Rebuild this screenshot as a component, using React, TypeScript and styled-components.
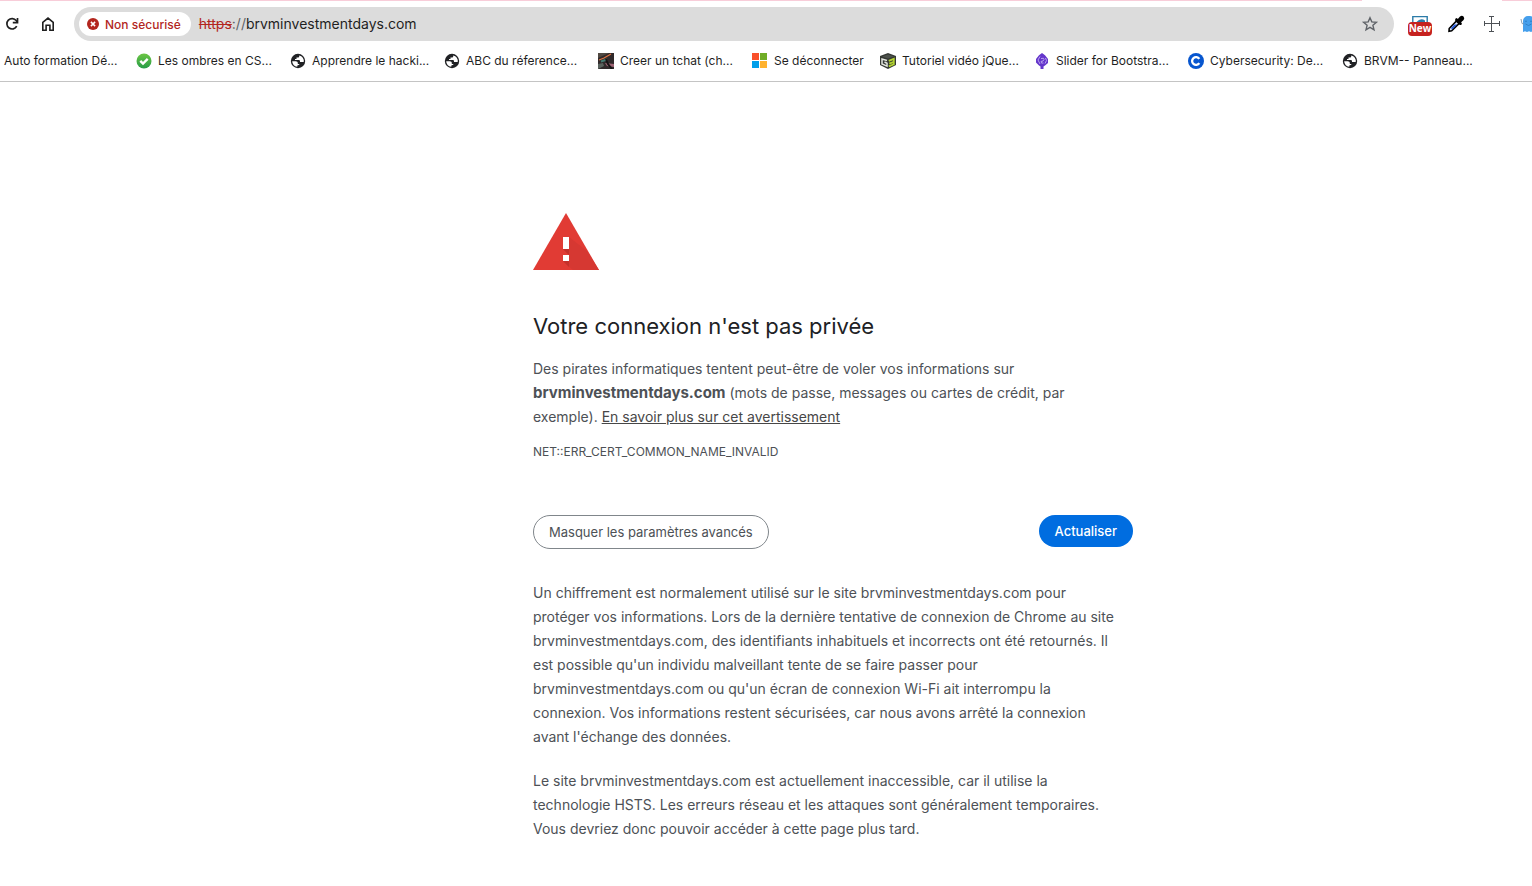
import React from "react";
import styled, { createGlobalStyle } from "styled-components";

const GlobalStyle = createGlobalStyle`
  * { box-sizing: border-box; }
  body {
    margin: 0;
    background: #fff;
    color: #1f1f1f;
    font-family: Inter, "Liberation Sans", sans-serif;
    overflow-x: hidden;
  }
  button { font-family: inherit; cursor: pointer; }
`;

const BrowserHeader = styled.header`
  border-bottom: 1px solid #c4c4c4;
  padding-bottom: 6px;
  overflow: hidden;
`;

const TabStripEdge = styled.div`
  display: flex;
  justify-content: space-between;
  height: 1px;
`;

const TabEdge = styled.div<{ $grow?: boolean }>`
  background: #f8cdd9;
  ${(p) => (p.$grow ? "flex: 1; margin-right: 140px;" : "width: 30px;")}
`;

const Toolbar = styled.div`
  display: flex;
  align-items: center;
  height: 46px;
  padding-left: 2px;
`;

const IconButton = styled.button`
  display: flex;
  flex: none;
  align-items: center;
  justify-content: center;
  width: 20px;
  height: 28px;
  padding: 0;
  border: 0;
  background: none;
  color: #1f1f1f;
`;

const Navigation = styled.nav`
  display: flex;
  gap: 16px;
  margin-right: 16px;
`;

const AddressBar = styled.div`
  display: flex;
  flex: 1;
  align-items: center;
  gap: 8px;
  height: 34px;
  padding: 0 14px 0 5px;
  border-radius: 17px;
  background: #dcdcdc;
`;

const SecurityChip = styled.button`
  display: flex;
  align-items: center;
  gap: 6px;
  height: 24px;
  padding: 0 10px 0 8px;
  border: 0;
  border-radius: 12px;
  background: #fff;
  color: #b3261e;
  font-size: 12px;
  font-weight: 500;
  white-space: nowrap;
`;

const Url = styled.div`
  flex: 1;
  font-size: 14px;
  line-height: 20px;
  white-space: nowrap;
`;

const StruckScheme = styled.s`
  color: #b3261e;
`;

const Separator = styled.span`
  color: #5f6368;
`;

const Extensions = styled.div`
  display: flex;
  flex: none;
  gap: 12px;
  width: 138px;
  padding-left: 14px;
  overflow: hidden;
`;

const ExtensionButton = styled(IconButton)`
  width: 24px;
`;

const BookmarkBar = styled.nav`
  display: flex;
  align-items: center;
  gap: 16px;
  height: 28px;
  padding-left: 4px;
`;

const Bookmark = styled.a`
  display: flex;
  flex: none;
  align-items: center;
  gap: 6px;
  color: #1f1f1f;
  font-size: 12px;
  line-height: 16px;
  text-decoration: none;
  white-space: nowrap;
`;

const BookmarkLabel = styled.span<{ $short?: boolean }>`
  width: ${(p) => (p.$short ? "90px" : "116px")};
`;

const Page = styled.main`
  display: grid;
  grid-template-columns: 533fr minmax(0, 600px) 399fr;
  padding: 131px 0 44px;
`;

const Interstitial = styled.section`
  grid-column: 2;
  color: #4d5156;
  font-size: 14px;
  line-height: 24px;
`;

const WarningIcon = styled.svg`
  display: block;
  margin-bottom: 41px;
`;

const Title = styled.h1`
  margin: 0 0 16px;
  color: #202124;
  font-size: 22px;
  font-weight: 400;
  line-height: 30px;
`;

const Paragraph = styled.p`
  margin: 0 0 20px;
`;

const Lead = styled(Paragraph)`
  margin: 0;
`;

const Line = styled.span`
  display: block;
`;

const SiteName = styled.strong`
  font-size: 15px;
  line-height: 20px;
`;

const LearnMore = styled.a`
  color: #474747;
`;

const ErrorCode = styled.div`
  margin: 14px 0 54px;
  font-size: 12px;
  line-height: 18px;
`;

const Actions = styled.div`
  display: flex;
  align-items: flex-start;
  justify-content: space-between;
  margin-bottom: 32px;
`;

const ActionButton = styled.button<{ $primary?: boolean }>`
  height: ${(p) => (p.$primary ? "32px" : "34px")};
  padding: ${(p) => (p.$primary ? "0 16px" : "0 15px")};
  border: ${(p) => (p.$primary ? "0" : "1px solid #80868b")};
  border-radius: 17px;
  background: ${(p) => (p.$primary ? "#006de0" : "#fff")};
  color: ${(p) => (p.$primary ? "#fff" : "#4d5156")};
  font-size: 13px;
  font-weight: ${(p) => (p.$primary ? 500 : 400)};
  white-space: nowrap;
`;

const ReloadIcon = () => (
  <svg width="16" height="16" viewBox="0 0 16 16" fill="none" stroke="currentColor" strokeWidth="1.7">
    <path d="M12.7 10.2A5.2 5.2 0 1 1 12.2 4.6L13.3 6" />
    <path d="M13.5 2v4.700H8.800" />
  </svg>
);

const HomeIcon = () => (
  <svg width="16" height="16" viewBox="0 0 16 16" fill="none" stroke="currentColor" strokeWidth="1.6">
    <path d="M2.800 6.300L8 2.100l5.200 4.200v7.900H9.900V9.300H6.100v4.900H2.800z" />
  </svg>
);

const DangerIcon = () => (
  <svg width="12" height="12" viewBox="0 0 12 12">
    <circle cx="6" cy="6" r="6" fill="#b3261e" />
    <path d="M3.900 3.900l4.200 4.200M8.100 3.900L3.900 8.100" stroke="#fff" strokeWidth="1.5" />
  </svg>
);

const StarIcon = () => (
  <svg width="18" height="18" viewBox="0 0 18 18" fill="none" stroke="#5f6368" strokeWidth="1.4">
    <path d="M9 2.700l1.800 4.200 4.600.4-3.500 3 1.100 4.500L9 12.400l-4 2.400 1.100-4.500-3.500-3 4.600-.4z" />
  </svg>
);

const NewExtensionIcon = () => (
  <svg width="24" height="24" viewBox="0 0 24 24">
    <path d="M4.800 11V4.600h14.400V11" fill="#fff" stroke="#2b7ba8" strokeWidth="1.400" />
    <path d="M8.500 10q4-4.500 8.500-1.500V10z" fill="#2b7ba8" />
    <rect y="10" width="24" height="14" rx="4" fill="#c5221f" />
    <text x="12" y="20" textAnchor="middle" fill="#fff" fontFamily="Open Sans, sans-serif" fontSize="10" fontWeight="700">New</text>
  </svg>
);

const EyedropperIcon = () => (
  <svg width="18" height="18" viewBox="0 0 18 18">
    <path d="M2.200 13.500L9.500 6l2.600 2.600-7.400 7.200-2.700.4z" fill="#dbe6ff" stroke="#000" strokeWidth="1.600" />
    <path d="M4 13l3.500-3.600h2.600l-5 5z" fill="#2457d6" />
    <path d="M8.300 3.700l1.500-.6 1 .8 2.200-2.500q2-1.400 3.500.1t.1 3.500l-2.500 2.200.8 1.200-.6 1.500-1.500.2L8.100 5.400z" fill="#000" />
  </svg>
);

const CrossArrowsIcon = () => (
  <svg width="18" height="18" viewBox="0 0 18 18" fill="none" stroke="#4d5156" strokeWidth="1">
    <path d="M8.500 1.500v15M1.500 8.500h15M6 1.500h5M6 16.500h5M1.500 6v5M16.500 6v5" />
  </svg>
);

const GhostIcon = () => (
  <svg width="24" height="18" viewBox="0 0 24 18">
    <path d="M7 17V6a5 5 0 0 1 5-5h2a5 5 0 0 1 5 5v11l-2-.8-2 .8-2-.8-2 .8-2-.8z" fill="#459fec" />
    <path d="M5 4l1 4.500 2 .5" fill="none" stroke="#7e98ae" strokeWidth=".9" />
    <path d="M9 6.500q1-1 2 0M14 6.500q1-1 2 0M9.500 9q3 3 6 0" fill="none" stroke="#2978be" strokeWidth=".8" />
  </svg>
);

const GlobeIcon = () => (
  <svg width="16" height="16" viewBox="0 0 16 16">
    <circle cx="8" cy="8" r="7.200" fill="#202124" />
    <path d="M2.200 8.200h3.600q2 0 2 1.500v1.200h1.500v.9l-2 .8v1.100A5.800 5.800 0 0 1 2.200 8.200z" fill="#fff" />
    <path d="M9.200 2.400v1.200q0 1-1.100 1H6.500v1.500H5v.9h3.800q1.200 0 1.200 1.100v1h3.700A5.800 5.800 0 0 0 9.200 2.400z" fill="#fff" />
  </svg>
);

const CheckIcon = () => (
  <svg width="16" height="16" viewBox="0 0 16 16">
    <defs>
      <linearGradient id="check-fill" x1="0" y1="0" x2="0" y2="1">
        <stop offset="0" stopColor="#6cc644" />
        <stop offset="1" stopColor="#279c48" />
      </linearGradient>
    </defs>
    <circle cx="8" cy="8" r="7.500" fill="url(#check-fill)" />
    <path d="M4.300 7.800l2.700 2.700 4.700-4.700" fill="none" stroke="#fff" strokeWidth="2.400" />
  </svg>
);

const ChatPhotoIcon = () => (
  <svg width="16" height="16" viewBox="0 0 16 16">
    <path fill="#30292a" d="M0 0h16v16H0z" />
    <path fill="#514942" d="M0 0h11L0 5z" />
    <path d="M1 7l5-2 7-4" stroke="#dc7442" strokeWidth="1.300" fill="none" />
    <path d="M3 8.500l6-2" stroke="#427b72" strokeWidth="2" />
    <path d="M7 10l9 1v3l-7-1z" fill="#9e6474" />
    <path d="M0 11l5-1 1 3-6 3z" fill="#59625d" />
    <path d="M8 6l2 5 4 5" stroke="#151314" strokeWidth="2" fill="none" />
  </svg>
);

const WindowsIcon = () => (
  <svg width="16" height="16" viewBox="0 0 16 16">
    <path fill="#f9502b" d="M0 0h7v7H0z" />
    <path fill="#70ad27" d="M8 0h7v7H8z" />
    <path fill="#009fea" d="M0 8h7v7H0z" />
    <path fill="#ffb22e" d="M8 8h7v7H8z" />
  </svg>
);

const CubeIcon = () => (
  <svg width="16" height="16" viewBox="0 0 16 16">
    <path d="M8 0l8 3v9l-8 4-8-4V3z" fill="#343834" />
    <path d="M2 3.600l6-2.200 6 2.200-6 2z" fill="#4c514b" />
    <path d="M7 7.500L2 6v5l5 2.200v-3L4.500 9" fill="none" stroke="#e2e5df" strokeWidth="1.500" />
    <path d="M8.800 7.800l5-2v5.400l-5 2.200M9.300 10.600l4.500-1.700" fill="none" stroke="#b3d332" strokeWidth="1.800" />
  </svg>
);

const GemIcon = () => (
  <svg width="16" height="16" viewBox="0 0 16 16">
    <path d="M8 0l3 2.200L14 6v4l-3 2.500-1.500 1V16h-3v-2.500L5 12.500 2 9.500V6l3-3.800z" fill="#6436cb" />
    <path d="M6 3.500L4 7l2 4M7 5.500q3.500-1 3 1T7 8.500q0 2.500 2.500 1.500M11.500 5l1 2.500-1.500 3" fill="none" stroke="#b9a0f0" strokeWidth="1" />
  </svg>
);

const LetterCIcon = () => (
  <svg width="16" height="16" viewBox="0 0 16 16">
    <circle cx="8" cy="8" r="8" fill="#0756cf" />
    <path d="M11.300 5.900a3.900 3.900 0 1 0 0 4.200" fill="none" stroke="#fff" strokeWidth="2.300" />
  </svg>
);

const bookmarks: { label: string; icon?: React.ReactNode; short?: boolean }[] = [
  { label: "Auto formation Dé..." },
  { label: "Les ombres en CS...", icon: <CheckIcon /> },
  { label: "Apprendre le hacki...", icon: <GlobeIcon /> },
  { label: "ABC du réference...", icon: <GlobeIcon /> },
  { label: "Creer un tchat (ch...", icon: <ChatPhotoIcon /> },
  { label: "Se déconnecter", icon: <WindowsIcon />, short: true },
  { label: "Tutoriel vidéo jQue...", icon: <CubeIcon /> },
  { label: "Slider for Bootstra...", icon: <GemIcon /> },
  { label: "Cybersecurity: De...", icon: <LetterCIcon /> },
  { label: "BRVM-- Panneau...", icon: <GlobeIcon /> },
];

const encryptionNotice = [
  "Un chiffrement est normalement utilisé sur le site brvminvestmentdays.com pour",
  "protéger vos informations. Lors de la dernière tentative de connexion de Chrome au site",
  "brvminvestmentdays.com, des identifiants inhabituels et incorrects ont été retournés. Il",
  "est possible qu'un individu malveillant tente de se faire passer pour",
  "brvminvestmentdays.com ou qu'un écran de connexion Wi-Fi ait interrompu la",
  "connexion. Vos informations restent sécurisées, car nous avons arrêté la connexion",
  "avant l'échange des données.",
];

const hstsNotice = [
  "Le site brvminvestmentdays.com est actuellement inaccessible, car il utilise la",
  "technologie HSTS. Les erreurs réseau et les attaques sont généralement temporaires.",
  "Vous devriez donc pouvoir accéder à cette page plus tard.",
];

export default function App() {
  return (
    <>
      <GlobalStyle />
      <BrowserHeader>
        <TabStripEdge>
          <TabEdge $grow />
          <TabEdge />
        </TabStripEdge>
        <Toolbar>
          <Navigation>
            <IconButton aria-label="Actualiser la page"><ReloadIcon /></IconButton>
            <IconButton aria-label="Accueil"><HomeIcon /></IconButton>
          </Navigation>
          <AddressBar>
            <SecurityChip><DangerIcon />Non sécurisé</SecurityChip>
            <Url><StruckScheme>https</StruckScheme><Separator>://</Separator>brvminvestmentdays.com</Url>
            <IconButton aria-label="Ajouter aux favoris"><StarIcon /></IconButton>
          </AddressBar>
          <Extensions>
            <ExtensionButton aria-label="Nouveautés"><NewExtensionIcon /></ExtensionButton>
            <ExtensionButton aria-label="Pipette"><EyedropperIcon /></ExtensionButton>
            <ExtensionButton aria-label="Dimensions"><CrossArrowsIcon /></ExtensionButton>
            <ExtensionButton aria-label="Fantôme"><GhostIcon /></ExtensionButton>
          </Extensions>
        </Toolbar>
        <BookmarkBar>
          {bookmarks.map((b) => (
            <Bookmark href="#" key={b.label}>
              {b.icon}
              <BookmarkLabel $short={b.short}>{b.label}</BookmarkLabel>
            </Bookmark>
          ))}
        </BookmarkBar>
      </BrowserHeader>
      <Page>
        <Interstitial>
          <WarningIcon width="66" height="57" viewBox="0 0 66 57" aria-hidden="true">
            <path d="M33 0l33 57H0z" fill="#e13b34" />
            <path d="M36 24l18 14 12 19H40l-10-9 6-6-6-6z" fill="#d63832" />
            <path d="M30 36h6v6zM30 48h6v6z" fill="#c4302b" />
            <path d="M30 24h6v12h-6zM30 42h6v6h-6z" fill="#fff" />
          </WarningIcon>
          <Title>Votre connexion n'est pas privée</Title>
          <Lead>
            <Line>Des pirates informatiques tentent peut-être de voler vos informations sur </Line>
            <Line>
              <SiteName>brvminvestmentdays.com</SiteName> (mots de passe, messages ou cartes de crédit, par
            </Line>
            <Line>
              exemple). <LearnMore href="#">En savoir plus sur cet avertissement</LearnMore>
            </Line>
          </Lead>
          <ErrorCode>NET::ERR_CERT_COMMON_NAME_INVALID</ErrorCode>
          <Actions>
            <ActionButton>Masquer les paramètres avancés</ActionButton>
            <ActionButton $primary>Actualiser</ActionButton>
          </Actions>
          <Paragraph>
            {encryptionNotice.map((line) => <Line key={line}>{line}</Line>)}
          </Paragraph>
          <Paragraph>
            {hstsNotice.map((line) => <Line key={line}>{line}</Line>)}
          </Paragraph>
        </Interstitial>
      </Page>
    </>
  );
}
